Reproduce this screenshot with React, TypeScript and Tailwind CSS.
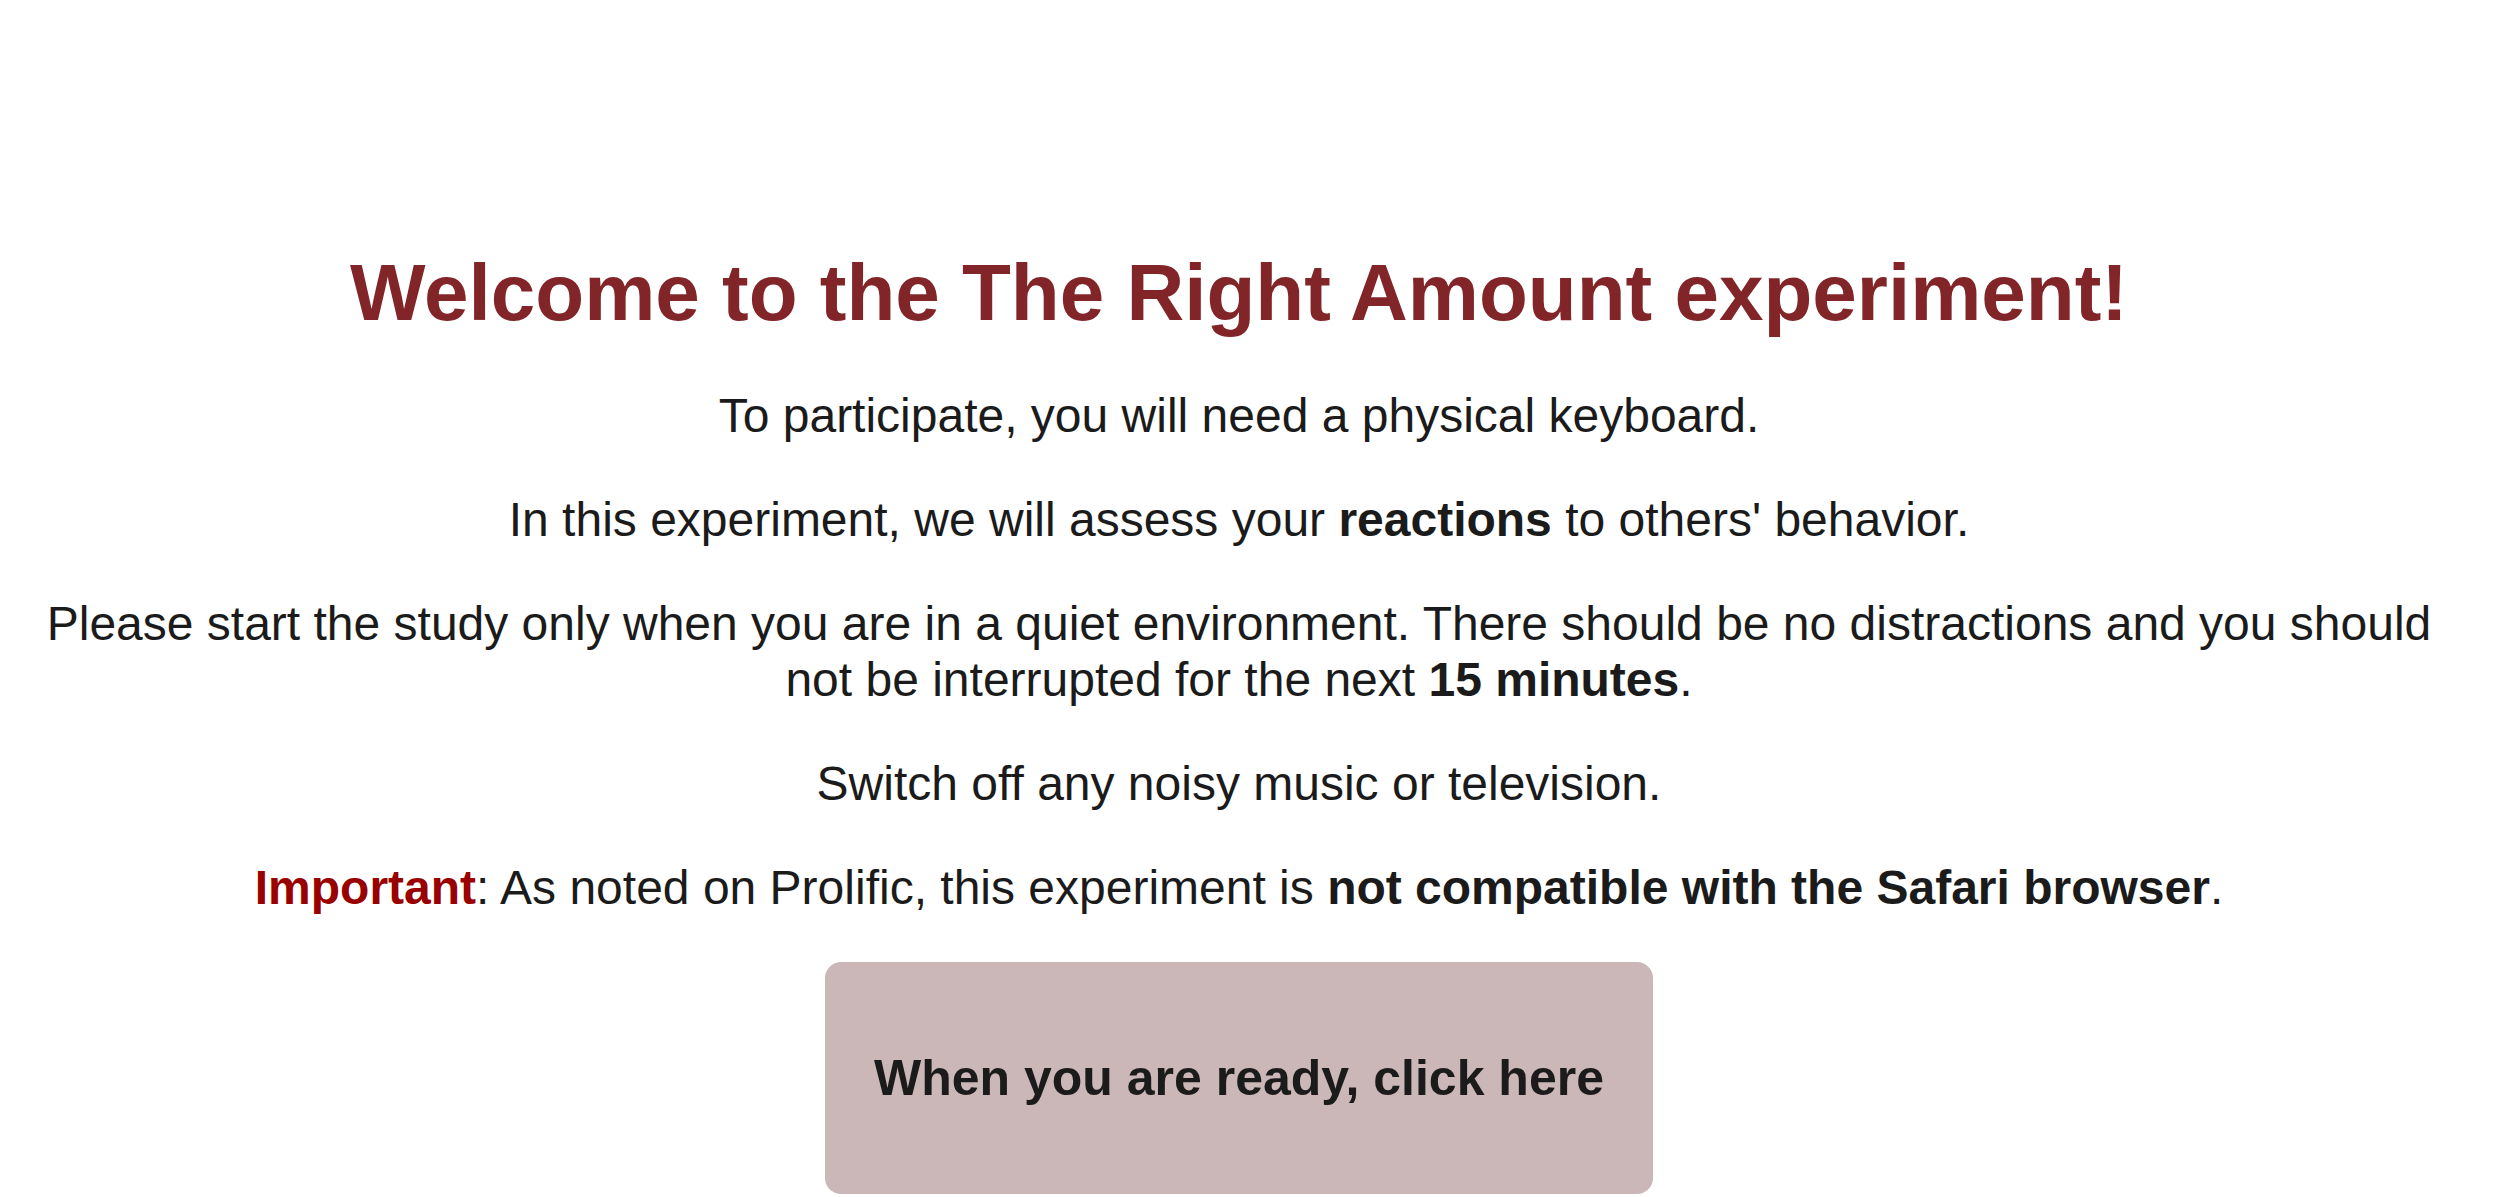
export default function App() {
  return (
    <div className="min-h-screen bg-white text-[#1b1b1b] font-['Liberation_Sans',Arial,Helvetica,sans-serif]">
      <div className="flex flex-col items-center text-center pl-[40px] pr-[70px] pt-[247px]">
        <h1 className="text-[80px] leading-[92px] font-bold text-[#822528]">
          Welcome to the The Right Amount experiment!
        </h1>
        <div className="mt-[49px] flex flex-col gap-[48px] text-[48px] leading-[56px]">
          <p>To participate, you will need a physical keyboard.</p>
          <p>
            In this experiment, we will assess your <b>reactions</b> to others' behavior.
          </p>
          <p className="max-w-[2400px]">
            Please start the study only when you are in a quiet environment. There should be no distractions and you
            should not be interrupted for the next <b>15 minutes</b>.
          </p>
          <p>Switch off any noisy music or television.</p>
          <p>
            <b className="text-[#990000]">Important</b>: As noted on Prolific, this experiment is{' '}
            <b>not compatible with the Safari browser</b>.
          </p>
        </div>
        <button className="mt-[46px] w-[828px] h-[232px] rounded-[16px] bg-[#cbb7b8] text-[50px] font-bold text-[#1b1b1b]">
          When you are ready, click here
        </button>
      </div>
    </div>
  );
}
